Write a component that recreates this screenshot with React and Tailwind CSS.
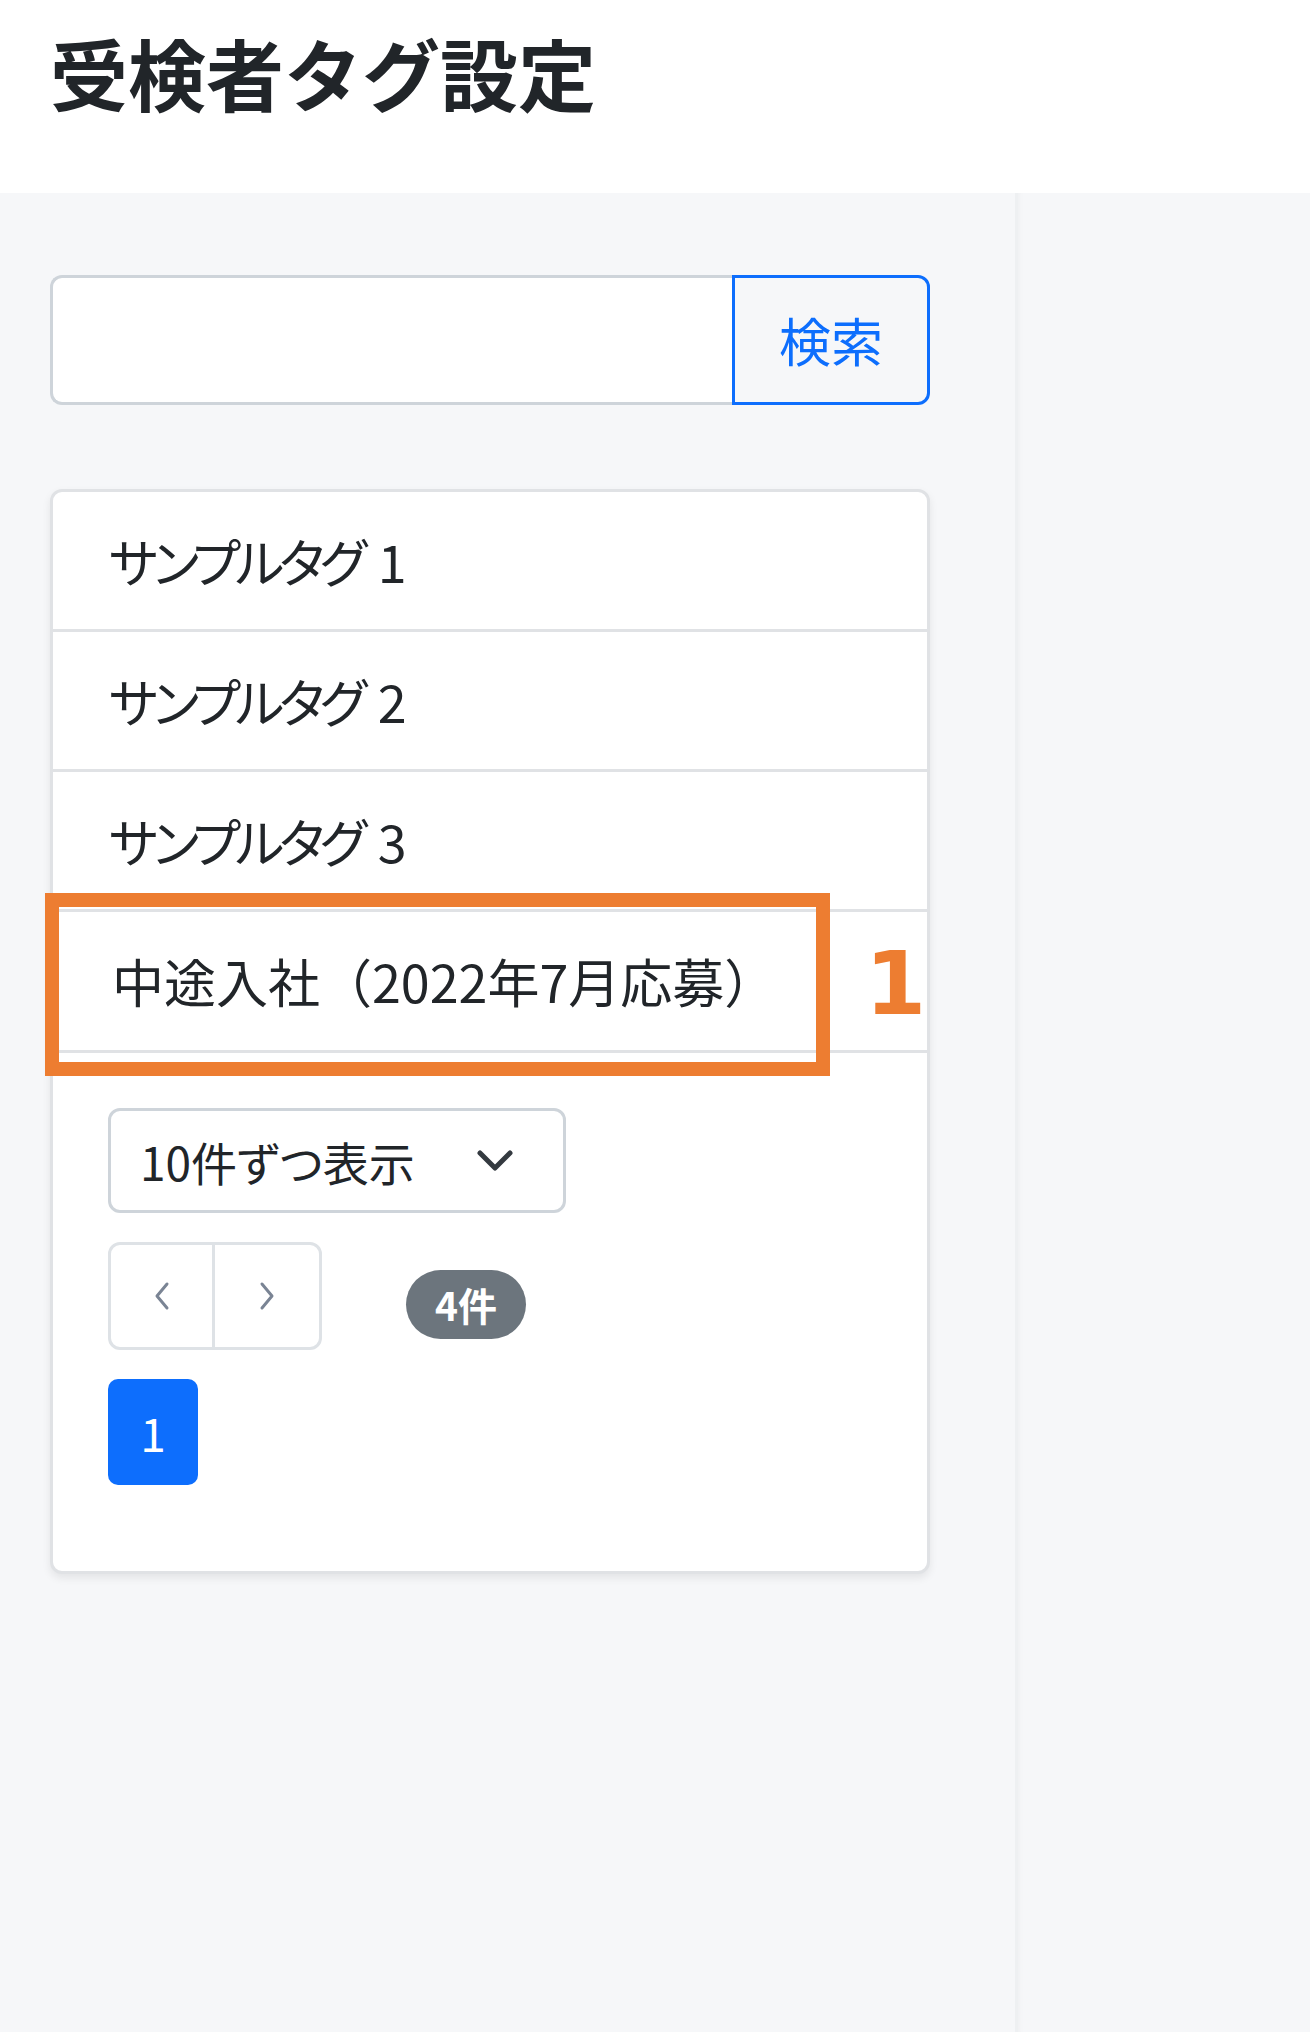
import React from 'react';

const tags = [
    { name: 'サンプルタグ', no: '1' },
    { name: 'サンプルタグ', no: '2' },
    { name: 'サンプルタグ', no: '3' },
];

const Chevron = ({ dir }) => (
    <svg width="20" height="30" viewBox="0 0 20 30" fill="none">
        <polyline
            points={dir === 'left' ? '15,3 5,15 15,27' : '5,3 15,15 5,27'}
            stroke="#7a8494"
            strokeWidth="3"
            strokeLinecap="round"
            strokeLinejoin="round"
        />
    </svg>
);

const App = () => {
    return (
        <div className="w-[1310px] h-[2032px] flex flex-col font-['Noto_Sans_CJK_JP','Noto_Sans',sans-serif] text-[#212529]">
            <header className="h-[193px] shrink-0 bg-white pl-[50px] pt-[33px]">
                <h1 className="text-[78px] leading-[78px] font-bold">受検者タグ設定</h1>
            </header>

            <div className="flex flex-1">
                <div className="w-[1015px] bg-[#f6f7f9] px-[50px]">
                    <div className="mt-[82px] flex h-[130px] w-[880px]">
                        <input
                            type="text"
                            className="flex-1 bg-white border-[3px] border-r-0 border-[#ced4da] rounded-l-[12px] outline-none"
                        />
                        <button className="w-[198px] border-[3px] border-[#0d6efd] rounded-r-[12px] text-[#0d6efd] text-[52px] leading-none">
                            検索
                        </button>
                    </div>

                    <div className="mt-[84px] w-[880px] bg-white border-[3px] border-[#e0e2e5] rounded-[12px] shadow-[0_4px_8px_rgba(0,0,0,0.08)]">
                        {tags.map((tag) => (
                            <div
                                key={tag.no}
                                className="h-[140px] flex items-center pl-[56px] border-b-[3px] border-[#e0e2e5] text-[52px] leading-none"
                            >
                                <span className="tracking-[-5px] [font-feature-settings:'palt']">{tag.name}</span>
                                <span className="ml-[16px]">{tag.no}</span>
                            </div>
                        ))}
                        <div className="relative h-[141px] flex items-center pl-[59px] border-b-[3px] border-[#e0e2e5] text-[52px] leading-none">
                            中途入社（2022年7月応募）
                            <div className="absolute left-[-8px] top-[-19px] w-[785px] h-[183px] border-[14px] border-[#ed7d31]"></div>
                            <span className="absolute left-[812px] top-[28px] text-[88px] leading-none font-bold text-[#ed7d31] font-['DejaVu_Sans',sans-serif]">
                                1
                            </span>
                        </div>

                        <div className="pt-[55px] pl-[55px] pb-[86px]">
                            <div className="flex items-center justify-between w-[458px] h-[105px] border-[3px] border-[#ced4da] rounded-[12px] pl-[29px] pr-[50px] text-[46px] leading-none [font-feature-settings:'palt']">
                                <span>10件ずつ表示</span>
                                <svg width="36" height="22" viewBox="0 0 36 22" fill="none">
                                    <polyline points="3,3 18,18 33,3" stroke="#343a40" strokeWidth="5" strokeLinecap="round" strokeLinejoin="round" />
                                </svg>
                            </div>

                            <div className="mt-[29px] flex items-start gap-[84px]">
                                <div className="flex h-[108px] border-[3px] border-[#dee2e6] rounded-[12px]">
                                    <button className="w-[104px] flex items-center justify-center border-r-[3px] border-[#dee2e6]">
                                        <Chevron dir="left" />
                                    </button>
                                    <button className="w-[104px] flex items-center justify-center">
                                        <Chevron dir="right" />
                                    </button>
                                </div>
                                <span className="mt-[28px] h-[69px] w-[120px] flex items-center justify-center rounded-full bg-[#6c757d] text-white font-bold text-[39px] leading-none">
                                    4件
                                </span>
                            </div>

                            <div className="mt-[29px] w-[90px] h-[106px] flex items-center justify-center rounded-[10px] bg-[#0d6efd] text-white text-[46px] leading-none">
                                1
                            </div>
                        </div>
                    </div>
                </div>
                <div className="flex-1 bg-[#f6f7f9] border-l-[3px] border-[#eef0f2] shadow-[inset_6px_0_6px_-6px_rgba(0,0,0,0.05)]"></div>
            </div>
        </div>
    );
};

export default App;
